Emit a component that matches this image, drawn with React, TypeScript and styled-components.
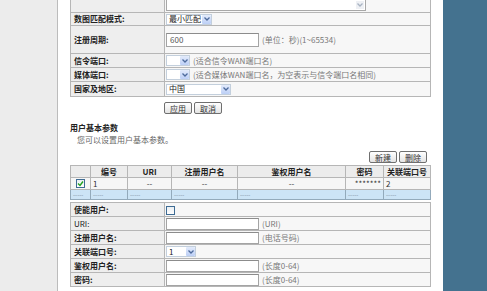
import React from 'react';
import styled, { createGlobalStyle } from 'styled-components';

const GlobalStyle = createGlobalStyle`
    html,
    body {
        margin: 0;
        padding: 0;
        background: #ffffff;
    }

    body {
        font-family: "Noto Sans CJK SC", "Noto Sans", sans-serif;
        font-size: 8px;
        color: #222222;
        overflow: hidden;
    }
`;

const Page = styled.div`
    display: flex;
    width: 487px;
    height: 291px;
    overflow: hidden;
`;

const Sidebar = styled.div`
    width: 57px;
    flex-shrink: 0;
    background: #ececec;
    border-right: 1px solid #bcbcbc;
`;

const Main = styled.div`
    width: 361px;
    flex-shrink: 0;
    padding: 0 12px;
`;

const SidePanel = styled.div`
    flex: 1;
    background: #44728f;
`;

const FormTable = styled.table<{ $shift?: number; $gap?: number }>`
    width: 361px;
    border-collapse: collapse;
    table-layout: fixed;
    border: 1px solid #a9a9a9;
    margin-top: ${(p) => (p.$shift ? `-${p.$shift}px` : `${p.$gap || 0}px`)};
`;

const Row = styled.tr<{ $h: number }>`
    height: ${(p) => p.$h}px;
`;

const Label = styled.td<{ $plain?: boolean }>`
    width: 90px;
    padding: 0 0 0 3px;
    background: #eeeeee;
    border: 1px solid #b6b6b6;
    font-weight: ${(p) => (p.$plain ? 'normal' : 'bold')};
    white-space: nowrap;
    line-height: 10px;
`;

const Value = styled.td`
    padding: 0 0 0 1px;
    background: #f7f7f7;
    border: 1px solid #b6b6b6;
    white-space: nowrap;
    line-height: 10px;
`;

const Field = styled.div`
    display: flex;
    align-items: center;
    gap: 3px;
`;

const Hint = styled.span`
    color: #777777;
    font-size: 8px;
`;

const TextArea = styled.div`
    width: 200px;
    height: 30px;
    box-sizing: border-box;
    border: 1px solid #a8a8a8;
    background: #ffffff;
    display: flex;
    justify-content: flex-end;
    align-items: flex-end;
    padding: 1px;
`;

const Input = styled.div<{ $h?: number }>`
    width: 93px;
    height: ${(p) => p.$h || 12}px;
    box-sizing: border-box;
    border: 1px solid #a4a4a4;
    border-top-color: #8c8c8c;
    background: #ffffff;
    padding-left: 3px;
    color: #555555;
    display: flex;
    align-items: center;
`;

const SelectBox = styled.div<{ $w: number }>`
    width: ${(p) => p.$w}px;
    height: 11px;
    box-sizing: border-box;
    display: flex;
    align-items: center;
    background: #ffffff;
    border: 1px solid #c3cfdc;
`;

const SelectText = styled.span`
    flex: 1;
    padding-left: 2px;
    white-space: nowrap;
`;

const SelectArrow = styled.span`
    width: 9px;
    height: 9px;
    flex-shrink: 0;
    display: flex;
    align-items: center;
    justify-content: center;
    background: linear-gradient(#e3ebfb, #bccff6);
    border-radius: 1px;
`;

const ScrollArrow = styled.span`
    width: 8px;
    height: 8px;
    display: flex;
    align-items: center;
    justify-content: center;
    background: #eef0f4;
`;

const Actions = styled.div<{ $align: 'left' | 'right' }>`
    display: flex;
    gap: 2px;
    justify-content: ${(p) => (p.$align === 'left' ? 'flex-start' : 'flex-end')};
    padding: ${(p) => (p.$align === 'left' ? '5px 0 0 94px' : '0 4px 2px 0')};
`;

const Button = styled.button`
    height: 12px;
    padding: 0 5px;
    font-family: inherit;
    font-size: 8px;
    line-height: 9px;
    color: #333333;
    border: 1px solid #6f6f6f;
    border-radius: 2px;
    background: linear-gradient(#ffffff, #e4e4e4);
`;

const SectionTitle = styled.div`
    margin-top: 8px;
    font-weight: bold;
    line-height: 12px;
`;

const SectionText = styled.div`
    padding-left: 7px;
    color: #666666;
    line-height: 12px;
    margin-bottom: 5px;
`;

const ListTable = styled.table`
    width: 361px;
    border-collapse: collapse;
    table-layout: fixed;
    border: 1px solid #a9a9a9;
`;

const HeadCell = styled.th<{ $w?: number }>`
    width: ${(p) => (p.$w ? `${p.$w}px` : 'auto')};
    height: 11px;
    padding: 0;
    background: #ececec;
    border: 1px solid #b6b6b6;
    font-weight: bold;
    text-align: center;
    line-height: 10px;
`;

const Cell = styled.td<{ $align?: 'left' | 'center' | 'right'; $blue?: boolean }>`
    height: ${(p) => (p.$blue ? 9 : 11)}px;
    padding: 0 2px;
    background: ${(p) => (p.$blue ? '#cce4f6' : '#f6f6f6')};
    border: 1px solid ${(p) => (p.$blue ? '#93aabb' : '#b6b6b6')};
    text-align: ${(p) => p.$align || 'left'};
    color: ${(p) => (p.$blue ? '#7a8a99' : '#333333')};
    font-size: ${(p) => (p.$blue ? 6 : 8)}px;
    line-height: 8px;
    white-space: nowrap;
    overflow: hidden;
`;

const Check = styled.span`
    width: 9px;
    height: 9px;
    box-sizing: border-box;
    display: inline-flex;
    align-items: center;
    justify-content: center;
    border: 1px solid #3f6c94;
    background: linear-gradient(#e9eef2, #ffffff);
    vertical-align: middle;
`;

const Chevron = ({ color = '#4d6a9c' }: { color?: string }) => (
    <svg width="6" height="4" viewBox="0 0 6 4">
        <path d="M0.5 0.5 L3 3 L5.5 0.5" fill="none" stroke={color} strokeWidth="1.3" />
    </svg>
);

const Select = ({ width, text }: { width: number; text?: string }) => (
    <SelectBox $w={width}>
        <SelectText>{text}</SelectText>
        <SelectArrow>
            <Chevron />
        </SelectArrow>
    </SelectBox>
);

const CheckBox = ({ checked }: { checked?: boolean }) => (
    <Check>
        {checked && (
            <svg width="7" height="7" viewBox="0 0 7 7">
                <path d="M1 3.5 L3 5.5 L6 1.5" fill="none" stroke="#21a121" strokeWidth="1.4" />
            </svg>
        )}
    </Check>
);

const columns = [
    { title: '', width: 19 },
    { title: '编号', width: 36 },
    { title: 'URI', width: 43 },
    { title: '注册用户名', width: 65 },
    { title: '鉴权用户名', width: 107 },
    { title: '密码', width: 37 },
    { title: '关联端口号' },
];

const dashes = '-----';

export default function App() {
    return (
        <Page>
            <GlobalStyle />
            <Sidebar />
            <Main>
                <FormTable $shift={22}>
                    <tbody>
                        <Row $h={34}>
                            <Label />
                            <Value>
                                <TextArea>
                                    <ScrollArrow>
                                        <Chevron color="#a8b3c2" />
                                    </ScrollArrow>
                                </TextArea>
                            </Value>
                        </Row>
                        <Row $h={13}>
                            <Label>数图匹配模式:</Label>
                            <Value>
                                <Select width={46} text="最小匹配" />
                            </Value>
                        </Row>
                        <Row $h={28}>
                            <Label>注册周期:</Label>
                            <Value>
                                <Field>
                                    <Input $h={14}>600</Input>
                                    <Hint>(单位：秒)(1~65534)</Hint>
                                </Field>
                            </Value>
                        </Row>
                        <Row $h={14}>
                            <Label>信令端口:</Label>
                            <Value>
                                <Field>
                                    <Select width={24} />
                                    <Hint>(适合信令WAN端口名)</Hint>
                                </Field>
                            </Value>
                        </Row>
                        <Row $h={14}>
                            <Label>媒体端口:</Label>
                            <Value>
                                <Field>
                                    <Select width={24} />
                                    <Hint>(适合媒体WAN端口名，为空表示与信令端口名相同)</Hint>
                                </Field>
                            </Value>
                        </Row>
                        <Row $h={15}>
                            <Label>国家及地区:</Label>
                            <Value>
                                <Select width={65} text="中国" />
                            </Value>
                        </Row>
                    </tbody>
                </FormTable>

                <Actions $align="left">
                    <Button>应用</Button>
                    <Button>取消</Button>
                </Actions>

                <SectionTitle>用户基本参数</SectionTitle>
                <SectionText>您可以设置用户基本参数。</SectionText>

                <Actions $align="right">
                    <Button>新建</Button>
                    <Button>删除</Button>
                </Actions>

                <ListTable>
                    <thead>
                        <tr>
                            {columns.map((c, i) => (
                                <HeadCell key={i} $w={c.width}>
                                    {c.title}
                                </HeadCell>
                            ))}
                        </tr>
                    </thead>
                    <tbody>
                        <tr>
                            <Cell $align="center">
                                <CheckBox checked />
                            </Cell>
                            <Cell>1</Cell>
                            <Cell $align="center">--</Cell>
                            <Cell $align="center">--</Cell>
                            <Cell $align="center">--</Cell>
                            <Cell $align="right">*******</Cell>
                            <Cell>2</Cell>
                        </tr>
                        <tr>
                            {columns.map((c, i) => (
                                <Cell key={i} $blue>
                                    {dashes}
                                </Cell>
                            ))}
                        </tr>
                    </tbody>
                </ListTable>

                <FormTable $gap={2}>
                    <tbody>
                        <Row $h={14}>
                            <Label>使能用户:</Label>
                            <Value>
                                <CheckBox />
                            </Value>
                        </Row>
                        <Row $h={14}>
                            <Label $plain>URI:</Label>
                            <Value>
                                <Field>
                                    <Input />
                                    <Hint>(URI)</Hint>
                                </Field>
                            </Value>
                        </Row>
                        <Row $h={14}>
                            <Label>注册用户名:</Label>
                            <Value>
                                <Field>
                                    <Input />
                                    <Hint>(电话号码)</Hint>
                                </Field>
                            </Value>
                        </Row>
                        <Row $h={14}>
                            <Label>关联端口号:</Label>
                            <Value>
                                <Select width={30} text="1" />
                            </Value>
                        </Row>
                        <Row $h={14}>
                            <Label>鉴权用户名:</Label>
                            <Value>
                                <Field>
                                    <Input />
                                    <Hint>(长度0-64)</Hint>
                                </Field>
                            </Value>
                        </Row>
                        <Row $h={14}>
                            <Label>密码:</Label>
                            <Value>
                                <Field>
                                    <Input />
                                    <Hint>(长度0-64)</Hint>
                                </Field>
                            </Value>
                        </Row>
                    </tbody>
                </FormTable>
            </Main>
            <SidePanel />
        </Page>
    );
}
